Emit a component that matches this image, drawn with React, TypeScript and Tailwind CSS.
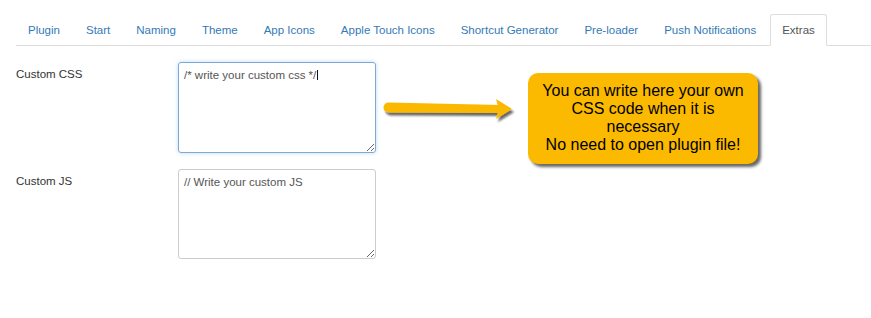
import React from 'react';

const tabs = [
  'Plugin',
  'Start',
  'Naming',
  'Theme',
  'App Icons',
  'Apple Touch Icons',
  'Shortcut Generator',
  'Pre-loader',
  'Push Notifications',
  'Extras',
];

export default function App() {
  const active = 'Extras';

  return (
    <div className="relative h-[318px] w-full bg-white pt-[14px] font-['Liberation_Sans',Arial,sans-serif] text-[11.5px] leading-4 text-[#333]">
      <ul className="ml-4 flex border-b border-[#ddd]">
        {tabs.map((tab) => {
          const isActive = tab === active;
          return (
            <li key={tab} className="-mb-px mr-[2px]">
              <a
                href="#"
                className={
                  isActive
                    ? 'block rounded-t-[3px] border border-[#ddd] border-b-white bg-white px-[11px] py-[7px] text-[#555]'
                    : 'block rounded-t-[3px] border border-transparent px-[11px] py-[7px] text-[#337ab7]'
                }
              >
                {tab}
              </a>
            </li>
          );
        })}
      </ul>

      <div className="mt-4 flex flex-col gap-4 pl-4">
        <div className="flex">
          <label className="w-[162px] pt-1">Custom CSS</label>
          <div className="relative">
            <textarea
              defaultValue="/* write your custom css */"
              className="block h-[91px] w-[198px] rounded-[3px] border border-[#7fa9d2] px-[5px] py-[4px] font-['Liberation_Sans',Arial,sans-serif] text-[11.5px] leading-4 text-[#555] shadow-[0_0_4px_rgba(102,175,233,0.45)] outline-none"
            />
            <span className="absolute left-[139px] top-[8px] h-[10px] w-px bg-[#111]" />
          </div>
        </div>

        <div className="flex">
          <label className="w-[162px] pt-1">Custom JS</label>
          <textarea
            defaultValue="// Write your custom JS"
            className="block h-[90px] w-[198px] rounded-[3px] border border-[#ccc] px-[5px] py-[4px] font-['Liberation_Sans',Arial,sans-serif] text-[11.5px] leading-4 text-[#555] outline-none"
          />
        </div>
      </div>

      {/* annotation */}
      <svg className="absolute left-[380px] top-[94px]" width="140" height="32" viewBox="0 0 140 32">
        <defs>
          <filter id="arrowShadow" x="-10%" y="-30%" width="130%" height="180%">
            <feDropShadow dx="2" dy="3" stdDeviation="1" floodColor="#000" floodOpacity="0.6" />
          </filter>
        </defs>
        <g filter="url(#arrowShadow)" fill="#fbb800">
          <path d="M8.5 8.5 L121 11 L121 19 L8.5 18.5 A5 5 0 0 1 8.5 8.5 Z" />
          <path d="M116 5 L132 15 L116 25 L119 15 Z" />
        </g>
      </svg>

      <div className="absolute left-[528px] top-[73px] w-[230px] rounded-[10px] bg-[#fbba00] pb-[10px] pt-[9px] text-center text-[16px] leading-[18px] text-black shadow-[3px_3px_3px_rgba(0,0,0,0.6)]">
        You can write here your own
        <br />
        CSS code when it is
        <br />
        necessary
        <br />
        No need to open plugin file!
      </div>
    </div>
  );
}
